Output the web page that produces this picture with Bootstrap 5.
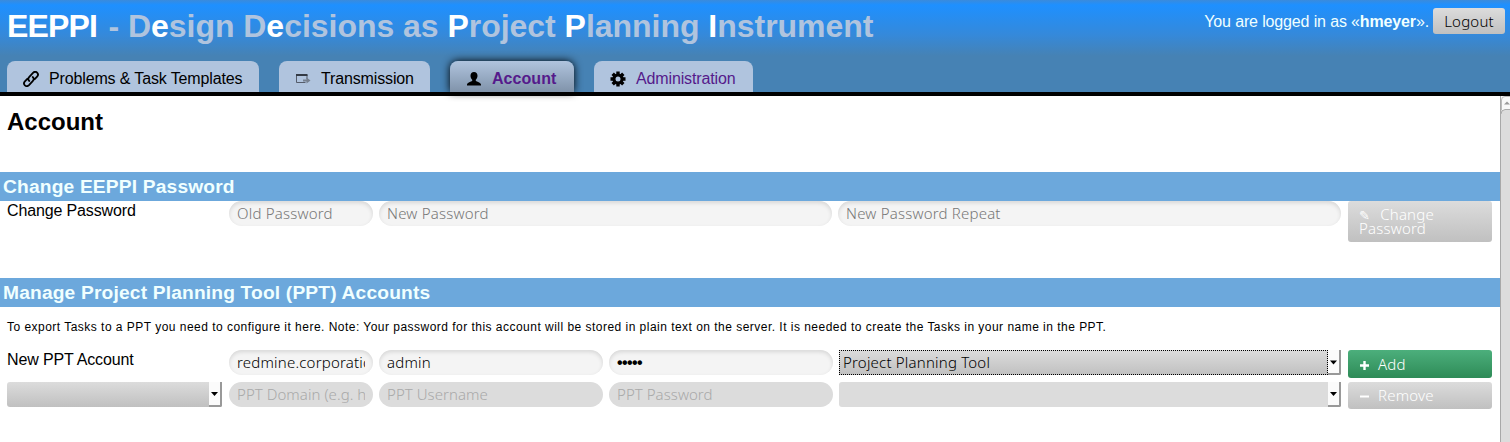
<!DOCTYPE html>
<html lang="en">
<head>
<meta charset="utf-8">
<title>EEPPI - Account</title>
<link rel="stylesheet" href="https://cdn.jsdelivr.net/npm/bootstrap@5.3.0/dist/css/bootstrap.min.css">
<style>
html,body{height:100%;overflow:hidden}
body{font:16px/18px "Liberation Sans",Arial,sans-serif;letter-spacing:-.14px;color:#000;background:#fff}
.topbar{height:96px;border-bottom:4px solid #000;background:linear-gradient(#3a8bdc 0,#1e90ff 5px,#3589da 35px,#4682b4 56px)}
.brand-title{font-size:32px;line-height:36px;letter-spacing:-.03px;font-weight:700;color:#b0c4de;padding:8px 0 0 7px;height:61px;white-space:nowrap}
.brand-title b{color:#fff}
.brand-title .acronym{letter-spacing:-.85px;margin-right:2.500px}
.login-info{color:azure;padding:8px 5px 0 0;white-space:nowrap;gap:4px}
.login-info span{padding-top:5px}
.field,.act,.pick,.logout{font-family:"Noto Sans","Open Sans",sans-serif;font-weight:300;font-size:15px;letter-spacing:.2px}
.logout{width:72px;height:26px;border:0;border-radius:3px;background:linear-gradient(#dcdcdc,#c0c0c0);color:#000;padding:0}
.tabs{padding-left:7px;gap:20px}
.tab-item{height:31px;border-radius:8px 8px 0 0;background:#b0c4de;color:#000;text-decoration:none;padding:4px 0 0 16px;white-space:nowrap}
.tab-item svg{width:16px;height:16px;margin-right:10px;flex:none}
.tab-item.visited{color:#551a8b}
.tab-item.current{font-weight:700;letter-spacing:.05px;background:linear-gradient(#b0c4de,#8093aa);box-shadow:0 0 8px #000}
.page-title{font-size:24px;line-height:28px;letter-spacing:0;font-weight:700;margin:0;padding:12px 0 0 7px;height:76px}
.scroller{width:10px;background:#dcdcdc;border-left:1px solid #a8a8a8}
.scroller svg{display:block}
.section-title{font-size:19.2px;line-height:29px;letter-spacing:.17px;font-weight:700;margin:0;padding-left:3px;background:#6ca8dc;color:azure}
.form-grid{display:grid;grid-template-columns:216px 144px 224px 224px 502px 144px;column-gap:6px;padding-left:7px;align-items:start}
.form-grid label{padding-top:1px}
.form-grid .act{margin-left:1px}
.span-two{display:grid;grid-column:3/6;grid-template-columns:453px 503px;column-gap:6px}
.hint{font-size:12px;letter-spacing:.475px;padding:11px 0 0 7px;height:43px;margin:0}
.field{height:25px;width:100%;min-width:0;border:0;border-radius:13px;background:#f4f4f4;padding:0 8px 2px;box-shadow:inset 0 2px 4px rgba(0,0,0,.12);color:#000}
.field::placeholder{color:#777;opacity:1}
.field:disabled{background:#dcdcdc;box-shadow:none}
.field:disabled::placeholder{color:#a9a9a9;letter-spacing:.05px}
.field.dots{font-family:"Liberation Sans",sans-serif;font-size:16px;font-weight:700;letter-spacing:-.6px;padding-bottom:0}
.act{width:144px;border:0;border-radius:3px;background:linear-gradient(#dcdcdc,#c0c0c0);color:#fff;text-align:left;padding:0 0 1px 11px;line-height:14px}
.act svg{width:11px;height:11px;margin-right:8px;vertical-align:-1px}
.act .pencil{font:13px/10px "DejaVu Sans",sans-serif;margin-right:6px}
.act.add{background:linear-gradient(#4caf7c,#2e8b57)}
.pick{height:25px}
.pick-value{background:linear-gradient(#dcdcdc,#c0c0c0);padding:0 4px;line-height:25px;border-radius:3px 0 0 3px}
.pick-value.focus{outline:1px dotted #000;outline-offset:-1px;border-radius:0}
.pick-value.flat{background:#dcdcdc}
.pick-arrow{width:13px;background:#fbfbfb;border-right:2px solid #999;border-bottom:2px solid #999;border-radius:0 0 2px 0}
</style>
</head>
<body class="d-flex flex-column">
<header class="topbar flex-shrink-0">
  <div class="d-flex justify-content-between">
    <h1 class="brand-title m-0"><b class="acronym">EEPPI</b> - D<b>e</b>sign D<b>e</b>cisions as <b>P</b>roject <b>P</b>lanning <b>I</b>nstrument</h1>
    <div class="login-info d-flex align-items-start"><span>You are logged in as «<b>hmeyer</b>».</span><button class="logout">Logout</button></div>
  </div>
  <nav class="tabs d-flex">
    <a href="#" class="tab-item d-flex align-items-center" style="width:252px"><svg viewBox="0 0 16 16" fill="none" stroke="#000" stroke-width="1.800" stroke-linecap="round"><path d="M6.300 10C4.800 8.700 5.200 7 6.300 5.800L10 1.800c1.300-1.300 3-1.300 4.100-.2s1.100 2.800 0 4L11.700 8.200M9.700 6c1.500 1.300 1.100 3 0 4.200L6 14.200c-1.300 1.300-3 1.300-4.100.2s-1.100-2.800 0-4L4.300 7.800"/></svg>Problems &amp; Task Templates</a>
    <a href="#" class="tab-item d-flex align-items-center" style="width:151px"><svg viewBox="0 0 16 16" fill="none"><path d="M10.500 11.500H1.500V4h10.500v4" stroke="#555d6b"/><path d="M1 3h11.500v2H1z" fill="#333a45"/><path d="M8 8.500h3.500V6.500l4 3-4 3v-2H8z" fill="#76808f"/></svg>Transmission</a>
    <a href="#" class="tab-item visited current d-flex align-items-center" style="width:124px"><svg viewBox="0 0 16 16"><path d="M8 1c2.200 0 3.500 1.500 3.500 3.700 0 1.800-.8 3.100-1.700 4v1.400c1.500.8 4.700 1.400 5.200 3.400v1H1v-1c.5-2 3.700-2.600 5.200-3.400V8.700c-.9-.9-1.700-2.200-1.700-4C4.500 2.500 5.800 1 8 1z"/></svg>Account</a>
    <a href="#" class="tab-item visited d-flex align-items-center" style="width:159px"><svg viewBox="0 0 16 16"><g stroke="#000" stroke-width="3.400"><path d="M8 .5v15M.5 8h15M2.700 2.700l10.600 10.600M13.300 2.700L2.700 13.300"/></g><circle cx="8" cy="8" r="5.600"/><circle cx="8" cy="8" r="2.500" fill="#b0c4de"/></svg>Administration</a>
  </nav>
</header>
<div class="d-flex flex-grow-1">
  <main class="flex-grow-1">
    <h2 class="page-title">Account</h2>
    <h3 class="section-title">Change EEPPI Password</h3>
    <div class="form-grid" style="height:77px">
      <label>Change Password</label>
      <input class="field" placeholder="Old Password">
      <div class="span-two"><input class="field" placeholder="New Password"><input class="field" placeholder="New Password Repeat"></div>
      <button class="act" style="height:41px"><span class="pencil">✎</span> Change Password</button>
    </div>
    <h3 class="section-title">Manage Project Planning Tool (PPT) Accounts</h3>
    <p class="hint">To export Tasks to a PPT you need to configure it here. Note: Your password for this account will be stored in plain text on the server. It is needed to create the Tasks in your name in the PPT.</p>
    <div class="form-grid" style="height:32px">
      <label>New PPT Account</label>
      <input class="field" value="redmine.corporation.com">
      <input class="field" value="admin">
      <input class="field dots" type="password" value="admin">
      <div class="pick d-flex"><div class="pick-value focus flex-grow-1">Project Planning Tool</div><svg class="pick-arrow" viewBox="0 0 11 23"><path d="M2 10.500h7l-3.500 4z"/></svg></div>
      <button class="act add" style="height:28px"><svg viewBox="0 0 11 11"><path d="M5.500 1v9M1 5.500h9" stroke="#fff" stroke-width="2.400"/></svg>Add</button>
    </div>
    <div class="form-grid">
      <div class="pick d-flex" style="width:215px"><div class="pick-value flex-grow-1"></div><svg class="pick-arrow" viewBox="0 0 11 23"><path d="M2 10h7l-3.500 4z"/></svg></div>
      <input class="field" placeholder="PPT Domain (e.g. http://ppt.com)" disabled>
      <input class="field" placeholder="PPT Username" disabled>
      <input class="field" placeholder="PPT Password" disabled>
      <div class="pick d-flex"><div class="pick-value flat flex-grow-1"></div><svg class="pick-arrow" viewBox="0 0 11 23"><path d="M2 10h7l-3.500 4z"/></svg></div>
      <button class="act" style="height:27px"><svg viewBox="0 0 11 11"><path d="M1 5.500h9" stroke="#fff" stroke-width="2"/></svg>Remove</button>
    </div>
  </main>
  <div class="scroller flex-shrink-0"><svg width="9" height="346" viewBox="0 0 9 346"><path d="M0 0h9v346H0z" fill="#dcdcdc"/><path d="M0 0h9v14H0z" fill="#f8f8f8"/><path d="M9 .5H4Q.5.500.5 4v10" fill="none" stroke="#bbb"/><path d="M3 8.500h6L6 5.500z" fill="#999"/><path d="M9 13.500H4Q0 14 0 18" fill="none" stroke="#aaa"/></svg></div>
</div>
<script src="https://cdn.jsdelivr.net/npm/bootstrap@5.3.0/dist/js/bootstrap.bundle.min.js"></script>
</body></html>
